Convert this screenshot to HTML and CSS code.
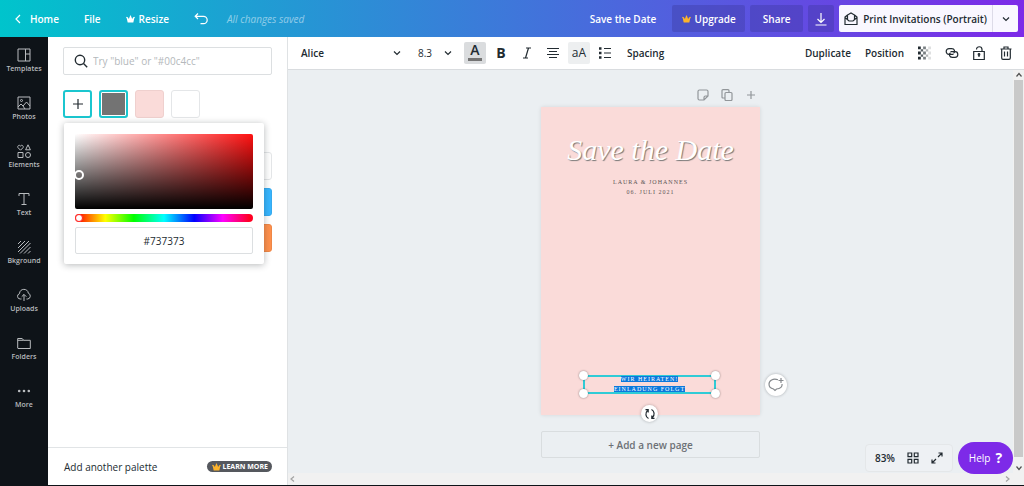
FILE: index.html
```html
<!DOCTYPE html>
<html lang="en">
<head>
<meta charset="utf-8">
<title>Save the Date</title>
<link rel="stylesheet" href="styles.css">
</head>
<body>
<svg class="defs" aria-hidden="true">
  <symbol id="crown" viewBox="0 0 16 14"><path fill="currentColor" d="M3 13 1.300 5.500 0 4.500 1.500 3l2 1.500L5 7l2-5L8 0l1 2 2 5 1.500-2.500 2-1.500L16 4.500l-1.300 1L13 13z"/></symbol>
  <symbol id="chevron" viewBox="0 0 8 8"><path d="m1 2.500 3 3 3-3"/></symbol>
</svg>

<header class="topbar">
  <nav class="topbar-nav">
    <a class="home" href="#"><svg class="icon back" viewBox="0 0 6 10"><path d="M5 1 1 5l4 4"/></svg>Home</a>
    <button class="plain">File</button>
    <button class="plain resize"><svg class="crown"><use href="#crown"/></svg>Resize</button>
    <button class="plain undo" aria-label="Undo"><svg class="icon" width="14" height="12" viewBox="0 0 14 12"><path d="M4 .5 1.200 3.300 4 6M1.200 3.300h8.300a3.700 3.700 0 0 1 0 7.400H6.500"/></svg></button>
    <span class="saved">All changes saved</span>
  </nav>
  <div class="topbar-actions">
    <button class="plain doc-title">Save the Date</button>
    <button class="dark upgrade"><svg class="crown gold"><use href="#crown"/></svg>Upgrade</button>
    <button class="dark share">Share</button>
    <button class="dark download" aria-label="Download"><svg class="icon" width="12" height="14" viewBox="0 0 12 14"><path d="M6 1v9M2.500 7 6 10.500 9.500 7M.5 13h11"/></svg></button>
    <div class="print">
      <button class="print-main"><svg class="icon" width="14" height="14" viewBox="0 0 14 14"><path d="M3.500 3 1 5v7.500h12V5l-2.500-2M1 5.500l4 3.500h4l4-3.500M3.500 7.500V3L7 1l3.500 2v4.500"/></svg>Print Invitations (Portrait)</button>
      <button class="print-more" aria-label="More print options"><svg class="icon" width="8" height="8"><use href="#chevron"/></svg></button>
    </div>
  </div>
</header>

<div class="workspace">
  <nav class="rail">
    <a href="#"><svg class="icon" viewBox="0 0 14 14"><path d="M1 1h12v12H1zM8.500 1v12M8.500 6H13"/></svg>Templates</a>
    <a href="#"><svg class="icon" viewBox="0 0 14 14"><path d="M1 1h12v12H1zM1 11l3-3 2 2 3.500-4L13 10M6 10l2 3"/><circle cx="4.500" cy="4.500" r="1"/></svg>Photos</a>
    <a href="#"><svg class="icon" viewBox="0 0 14 14"><path d="M3.500 6.200 1 3.700C0 2 2.200.3 3.500 2 4.800.3 7 2 6 3.700zM11 .8l2.400 5H8.600zM1 8.500h5v5H1z"/><circle cx="11" cy="11" r="2.500"/></svg>Elements</a>
    <a href="#"><svg class="icon" viewBox="0 0 14 14"><path d="M2 4V1.500h10V4M7 1.500v11M4.500 12.500h5"/></svg>Text</a>
    <a href="#"><svg class="icon" viewBox="0 0 14 14"><path d="m1 4 3-3M1 8l7-7M1 12 12 1M3 13.500 13.500 3M7 13.500 13.500 7M11 13.500l2.500-2.500"/></svg>Bkground</a>
    <a href="#"><svg class="icon" viewBox="0 0 14 14"><path d="M4.500 11H3.300A2.700 2.700 0 0 1 2.500 5.700C2.500 0 11 0 11.300 5.200A3 3 0 0 1 10.700 11H9.500M7 13V6.500M4.700 8.700 7 6.400l2.300 2.300"/></svg>Uploads</a>
    <a href="#"><svg class="icon" viewBox="0 0 14 14"><path d="M.7 12V2.500h4.500l1.500 1.800h6.600v8.200H.7M.7 4.300h6"/></svg>Folders</a>
    <a href="#"><svg class="icon dots" viewBox="0 0 14 14"><circle cx="2.200" cy="7" r="1.300"/><circle cx="7" cy="7" r="1.300"/><circle cx="11.800" cy="7" r="1.300"/></svg>More</a>
  </nav>

  <aside class="panel">
    <div class="panel-body">
      <label class="search">
        <svg class="icon" width="14" height="14" viewBox="0 0 14 14"><circle cx="6" cy="6" r="4.700"/><path d="m9.500 9.500 3.700 3.700"/></svg>
        <input type="search" aria-label="Search colours" placeholder="Try &quot;blue&quot; or &quot;#00c4cc&quot;">
      </label>
      <div class="swatches">
        <button class="swatch add" aria-label="Add a colour"><svg class="icon" width="12" height="12" viewBox="0 0 12 12"><path d="M6 1v10M1 6h10"/></svg></button>
        <button class="swatch grey" aria-label="Grey"></button>
        <button class="swatch pink" aria-label="Pink"></button>
        <button class="swatch" aria-label="White"></button>
      </div>
      <div class="defaults">
        <button class="swatch" aria-label="White"></button>
        <button class="swatch blue" aria-label="Blue"></button>
        <button class="swatch orange" aria-label="Orange"></button>
        <div class="picker">
          <div class="shade"><span class="shade-knob"></span></div>
          <input class="hue" type="range" min="0" max="360" value="0" aria-label="Hue">
          <input class="hex" type="text" value="#737373" aria-label="Hex colour">
        </div>
      </div>
    </div>
    <footer class="panel-foot">
      <span>Add another palette</span>
      <a class="learn" href="#"><svg class="crown gold"><use href="#crown"/></svg>LEARN MORE</a>
    </footer>
  </aside>

  <main class="editor">
    <div class="toolbar">
      <div class="tools">
        <button class="font">Alice<svg class="icon" width="8" height="8"><use href="#chevron"/></svg></button>
        <button class="size">8.3<svg class="icon" width="8" height="8"><use href="#chevron"/></svg></button>
        <button class="tool colour" aria-label="Text colour">A</button>
        <button class="tool bold" aria-label="Bold">B</button>
        <button class="tool" aria-label="Italic"><svg class="icon" width="10" height="12" viewBox="0 0 10 12"><path d="M4 1h5M1 11h5M6.500 1l-3 10"/></svg></button>
        <button class="tool" aria-label="Alignment"><svg class="icon" width="12" height="12" viewBox="0 0 12 12"><path d="M0 1.500h12M2 4.500h8M0 7.500h12M2 10.500h8"/></svg></button>
        <button class="tool case">aA</button>
        <button class="tool" aria-label="List"><svg class="icon" width="12" height="12" viewBox="0 0 12 12"><path d="M5 1.500h7M5 6h7M5 10.500h7"/><path class="bullets" d="M0 1.500h2.500M0 6h2.500M0 10.500h2.500"/></svg></button>
        <button class="text-tool">Spacing</button>
      </div>
      <div class="tools object-tools">
        <button class="text-tool">Duplicate</button>
        <button class="text-tool">Position</button>
        <button class="glyph" aria-label="Transparency"><svg width="14" height="14" viewBox="0 0 14 14"><g fill="#222b31"><path d="M0 0h3v3H0zM0 5.500h3v3H0zM0 11h3v3H0z"/><path opacity=".75" d="M3 3h2.500v2.500H3zM3 8.500h2.500V11H3z"/><path opacity=".6" d="M5.500 0h3v3h-3zM5.500 5.500h3v3h-3zM5.500 11h3v3h-3z"/><path opacity=".35" d="M8.500 3H11v2.500H8.500zM8.500 8.500H11V11H8.500z"/><path opacity=".15" d="M11 0h3v3h-3zM11 5.500h3v3h-3zM11 11h3v3h-3z"/></g></svg></button>
        <button class="glyph" aria-label="Link"><svg class="icon" width="14" height="12" viewBox="0 0 14 12"><path d="M8.500 7.300H4a2.800 2.800 0 0 1 0-5.600h2.700c3 0 3.800 3.200 1.800 4.600"/><path d="M5.500 4.700H10a2.800 2.800 0 0 1 0 5.600H7.300c-3 0-3.800-3.200-1.800-4.600"/></svg></button>
        <button class="glyph" aria-label="Lock"><svg class="icon" width="12" height="14" viewBox="0 0 12 14"><path d="M.7 5.500h10.600v8H.7zM3.500 3.500C3.500-.2 9-.2 9 3.500v2M6 8.500V11"/><circle cx="6" cy="8.500" r=".8"/></svg></button>
        <button class="glyph" aria-label="Delete"><svg class="icon" width="12" height="14" viewBox="0 0 12 14"><path d="M.5 3h11M4 3V1h4v2M1.700 3v9c0 .8.500 1.300 1.300 1.300h6c.8 0 1.300-.5 1.300-1.300V3M4.500 5.500v5M7.500 5.500v5"/></svg></button>
      </div>
    </div>

    <div class="stage">
      <div class="canvas">
        <div class="page-column">
          <div class="page-tools">
            <button aria-label="Notes"><svg class="icon" width="12" height="12" viewBox="0 0 12 12"><path d="M11 7V2.500C11 1.500 10.500 1 9.500 1h-7C1.500 1 1 1.500 1 2.500v7c0 1 .5 1.500 1.500 1.500H7zM7 11V8.500C7 7.500 7.500 7 8.500 7H11"/></svg></button>
            <button aria-label="Copy page"><svg class="icon" width="12" height="12" viewBox="0 0 12 12"><rect x="4" y="3.500" width="7" height="8" rx="1"/><path d="M4 9H2C1.300 9 1 8.700 1 8V1.800C1 1 1.300.7 2 .7h5c.7 0 1 .3 1 1v1.800"/></svg></button>
            <button aria-label="Add page"><svg class="icon" width="12" height="12" viewBox="0 0 12 12"><path d="M6 2v8M2 6h8"/></svg></button>
          </div>
          <article class="page">
            <h1>Save the Date</h1>
            <p class="names">LAURA &amp; JOHANNES<br>06. JULI 2021</p>
            <div class="selection">
              <p class="names"><mark>WIR HEIRATEN!</mark><br><mark>EINLADUNG FOLGT</mark></p>
              <i class="handle tl"></i><i class="handle tr"></i><i class="handle bl"></i><i class="handle br"></i>
              <button class="rotate" aria-label="Rotate"><svg class="icon" width="12" height="12" viewBox="0 0 12 12"><path d="M4.500 10.500C1.500 9 1 5 3.500 2.500M1.500 1.700h2.700v2.700M7.500 1.500c3 1.500 3.500 5.500 1 8M10.500 10.300H7.800V7.600"/></svg></button>
            </div>
            <button class="comment" aria-label="Comment"><svg class="icon" width="16" height="14" viewBox="0 0 16 14"><path d="M10 1.800C5 0 1 2.500 1 6c0 2.500 2 4.500 4.500 5L7 12.500 8.500 11c4-.2 6-2.500 5.500-5M13 0v5M10.500 2.500h5"/></svg></button>
          </article>
          <button class="add-page">+ Add a new page</button>
        </div>
        <div class="zoombar">
          <button>83%</button>
          <button aria-label="Grid view"><svg class="icon" width="12" height="12" viewBox="0 0 12 12"><path d="M1 1h3.700v3.700H1zM7.300 1H11v3.700H7.300zM1 7.300h3.700V11H1zM7.300 7.300H11V11H7.300z"/></svg></button>
          <button aria-label="Full screen"><svg class="icon" width="12" height="12" viewBox="0 0 12 12"><path d="M7.500 1H11v3.500M11 1 7 5M4.500 11H1V7.500M1 11l4-4"/></svg></button>
        </div>
        <button class="help">Help <b>?</b></button>
      </div>
      <div class="vscroll"><svg class="icon" viewBox="0 0 8 8"><path d="m1.500 5.500 2.500-3 2.500 3"/></svg><span class="thumb"></span><svg class="icon" viewBox="0 0 8 8"><path d="m1.500 2.500 2.500 3 2.500-3"/></svg></div>
    </div>
    <div class="hscroll"><svg class="icon" width="8" height="8" viewBox="0 0 8 8"><path d="m5 1.500-3 2.500 3 2.500"/></svg><svg class="icon" width="8" height="8" viewBox="0 0 8 8"><path d="m3 1.500 3 2.500-3 2.500"/></svg></div>
  </main>
</div>
</body>
</html>
```

FILE: styles.css
```css
* { box-sizing: border-box; }

body {
  margin: 0;
  height: 100vh;
  display: flex;
  flex-direction: column;
  overflow: hidden;
  border-bottom: 1px solid #0e1318;
  background: #fff;
  color: #222b31;
  font: 10px/16px "Open Sans", sans-serif;
}

button {
  display: flex;
  align-items: center;
  justify-content: center;
  padding: 0;
  border: 0;
  background: none;
  color: inherit;
  font: inherit;
  white-space: nowrap;
}

input { font: inherit; }
a { color: inherit; text-decoration: none; }
.defs { position: absolute; width: 0; height: 0; }

.icon {
  flex: none;
  fill: none;
  stroke: currentColor;
  stroke-width: 1.2;
}

.crown { width: 9px; height: 8px; flex: none; }
.gold { color: #fdb32b; }

/* Top bar */
.topbar {
  flex: none;
  display: flex;
  align-items: center;
  justify-content: space-between;
  height: 37px;
  padding: 0 6px 0 15px;
  background: linear-gradient(90deg, #00c4cc, #7d2ae8);
  color: #fff;
  font-weight: 600;
}

.topbar-nav, .topbar-actions { display: flex; align-items: center; }
.topbar-nav { gap: 25px; }
.topbar-actions { gap: 5px; }
.home { display: flex; align-items: center; gap: 9px; }
.back { width: 6px; height: 10px; }
.resize { gap: 4px; }
.saved {
  margin-left: -6px;
  color: rgba(255, 255, 255, .5);
  font-style: italic;
  font-weight: 400;
}
.doc-title { margin-right: 11px; }
.dark {
  height: 27px;
  border-radius: 2px;
  background: rgba(57, 54, 150, .34);
}
.upgrade { width: 73px; gap: 4px; }
.share { width: 53px; }
.download { width: 26px; }
.print {
  display: flex;
  height: 27px;
  border-radius: 2px;
  background: #f9f7ff;
  color: #222b31;
}
.print-main { padding: 0 5px; gap: 5px; }
.print-more { width: 26px; border-left: 1px solid #dddbe8; }

.workspace { flex: 1; display: flex; min-height: 0; }

/* Left rail */
.rail {
  flex: none;
  width: 48px;
  background: #0e1318;
  color: #b9bcbf;
  font-size: 7px;
  font-weight: 600;
  line-height: 10px;
}
.rail a {
  display: flex;
  flex-direction: column;
  align-items: center;
  gap: 2px;
  height: 48px;
  padding-top: 11px;
}
.rail .icon { width: 14px; height: 14px; stroke-width: 1; }
.rail .dots { fill: currentColor; stroke: none; }

/* Colour panel */
.panel {
  flex: none;
  display: flex;
  flex-direction: column;
  width: 240px;
  border-right: 1px solid #dfe2e4;
}
.panel-body { flex: 1; padding: 10px 15px 0; }
.search {
  display: flex;
  align-items: center;
  gap: 5px;
  height: 28px;
  padding: 0 10px;
  border: 1px solid #dcdfe1;
  border-radius: 2px;
}
.search .icon { stroke-width: 1.4; }
.search input {
  flex: 1;
  min-width: 0;
  padding: 0;
  border: 0;
  outline: 0;
  background: none;
}
.search input::placeholder { color: #b4b8bb; }
.swatches { display: flex; gap: 7px; margin-top: 15px; }
.swatch {
  width: 29px;
  height: 28px;
  border: 1px solid #e4e6e8;
  border-radius: 3px;
  background: #fff;
}
.add, .grey { border: 2px solid #1bc6cf; }
.grey { background: #737373; box-shadow: inset 0 0 0 1px #fff; }
.pink { border-color: #efd0ce; background: #fadbd9; }
.blue { border-color: #38abef; background: #38b6ff; }
.orange { border-color: #ef8848; background: #ff914d; }
.defaults {
  position: relative;
  display: flex;
  flex-direction: column;
  align-items: flex-end;
  gap: 8px;
  margin-top: 34px;
}
.picker {
  position: absolute;
  top: -29px;
  left: 1px;
  right: 8px;
  display: flex;
  flex-direction: column;
  padding: 11px 11px 10px;
  border-radius: 2px;
  background: #fff;
  box-shadow: 0 1px 7px rgba(14, 19, 24, .3);
}
.shade {
  position: relative;
  height: 75px;
  border-radius: 2px;
  background: linear-gradient(0deg, #000, transparent), linear-gradient(90deg, #fff, #f11);
}
.shade-knob {
  position: absolute;
  top: 36px;
  left: -1px;
  width: 10px;
  height: 10px;
  border: 2px solid #fff;
  border-radius: 50%;
}
.hue {
  appearance: none;
  width: 100%;
  height: 8px;
  margin: 5px 0;
  border-radius: 4px;
  background: linear-gradient(90deg, #f10 2%, #ff0 17%, #0f0 33%, #0ff 50%, #00f 67%, #f0f 83%, #f02 98%);
}
.hue::-webkit-slider-thumb {
  appearance: none;
  width: 8px;
  height: 8px;
  border: 1px solid #f22;
  border-radius: 50%;
  background: #fff;
}
.hex {
  width: 100%;
  height: 27px;
  border: 1px solid #dcdfe1;
  border-radius: 2px;
  color: #222b31;
  text-align: center;
}
.panel-foot {
  flex: none;
  display: flex;
  align-items: center;
  justify-content: space-between;
  height: 38px;
  padding: 0 15px 0 16px;
  border-top: 1px solid #e1e4e6;
}
.learn {
  display: flex;
  align-items: center;
  gap: 1px;
  padding: 0 4px 0 5px;
  border-radius: 6px;
  background: #55585e;
  color: #fff;
  font-size: 7px;
  font-weight: 700;
  line-height: 11px;
}

/* Editor */
.editor { flex: 1; display: flex; flex-direction: column; min-width: 0; }
.toolbar {
  flex: none;
  display: flex;
  align-items: center;
  justify-content: space-between;
  height: 33px;
  padding: 0 12px 0 13px;
  border-bottom: 1px solid #d9dcdf;
}
.tools { display: flex; align-items: center; gap: 4px; }
.object-tools { gap: 14px; }
.text-tool { font-weight: 600; }
.font, .size { justify-content: space-between; }
.font { width: 100px; margin-right: 13px; font-weight: 600; }
.size { width: 34px; margin-right: 8px; }
.tool { width: 22px; height: 22px; border-radius: 2px; }
.tool + .text-tool { margin-left: 7px; }
.colour {
  align-items: flex-start;
  border-bottom: 3px solid #dadcde;
  background: linear-gradient(#737373, #737373) center bottom / 14px 3px no-repeat #dadcde;
  font-size: 14px;
  font-weight: 600;
}
.bold { font-size: 14px; font-weight: 700; }
.case { background: #edeff0; font-size: 12px; }
.bullets { stroke-width: 2.5; }
.glyph { width: 13px; }

.stage { flex: 1; display: flex; min-height: 0; }
.canvas {
  position: relative;
  flex: 1;
  padding-top: 17px;
  background: #ebeff2;
}
.page-column { width: 219px; margin: 0 auto; }
.page-tools {
  display: flex;
  justify-content: flex-end;
  align-items: flex-start;
  gap: 12px;
  height: 20px;
  padding-right: 3px;
  color: #92969a;
}
.page-tools button { height: 16px; }
.page {
  position: relative;
  height: 308px;
  padding-top: 23px;
  background: #fadbd9;
  box-shadow: 0 0 4px rgba(14, 19, 24, .1);
  text-align: center;
}
.page h1 {
  margin: 0;
  color: #fff;
  font: italic 400 30px/40px "Liberation Serif", serif;
  text-shadow: 1px 1px 1px #777;
}
.names {
  margin: 7px 0 0;
  color: #5c5655;
  font: 6px/10px "Liberation Serif", serif;
  letter-spacing: 1px;
}
.selection {
  position: absolute;
  left: 42px;
  right: 44px;
  bottom: 21px;
  height: 19px;
  border: 2px solid #2fcbd6;
}
.selection .names { margin: -3px 0 0; }
mark { background: #0b78dc; color: #fff; }
.handle {
  position: absolute;
  width: 9px;
  height: 9px;
  border-radius: 50%;
  background: #fff;
  box-shadow: 0 0 2px rgba(14, 19, 24, .5);
}
.tl, .tr { top: -6px; }
.bl, .br { bottom: -6px; }
.tl, .bl { left: -6px; }
.tr, .br { right: -6px; }
.rotate, .comment {
  position: absolute;
  border-radius: 50%;
  background: #fff;
  box-shadow: 0 0 3px rgba(14, 19, 24, .3);
}
.rotate { top: 28px; left: 56px; width: 17px; height: 17px; }
.comment { right: -27px; bottom: 19px; width: 22px; height: 22px; color: #85898d; }
.add-page {
  width: 100%;
  height: 27px;
  margin-top: 16px;
  border: 1px solid #d9dddf;
  border-radius: 2px;
  color: #6d7176;
  font-weight: 600;
}
.zoombar {
  position: absolute;
  right: 60px;
  bottom: 1px;
  display: flex;
  align-items: center;
  gap: 12px;
  height: 28px;
  padding: 0 9px;
  border: 1px solid #e4e7e9;
  border-radius: 4px;
  background: #eef1f4;
  font-weight: 600;
}
.help {
  position: absolute;
  right: 0;
  bottom: -1px;
  z-index: 1;
  gap: 5px;
  width: 55px;
  height: 32px;
  border-radius: 16px;
  background: #7d2ae8;
  color: #fff;
}
.help b { font-size: 14px; }
.vscroll {
  flex: none;
  display: flex;
  flex-direction: column;
  align-items: center;
  width: 11px;
  padding: 1px 0;
  background: #f1f1f1;
  color: #505050;
}
.vscroll .icon { width: 8px; height: 8px; }
.thumb { flex: 1; width: 9px; margin: 1px 0 7px; background: #c9c9c9; }
.hscroll {
  flex: none;
  display: flex;
  align-items: center;
  justify-content: space-between;
  height: 12px;
  padding: 0 13px 0 1px;
  background: #f1f1f1;
  color: #a3a3a3;
}
```
